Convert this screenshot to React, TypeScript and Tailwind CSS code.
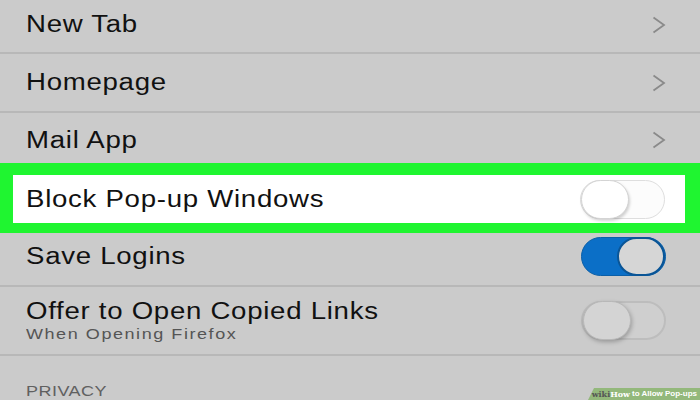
import React from 'react';

const Chevron = () => (
  <svg width="14" height="18" viewBox="0 0 14 18" className="shrink-0">
    <polyline points="1.5,1.5 12,9 1.5,16.5" fill="none" stroke="#8a8a8a" strokeWidth="1.8" />
  </svg>
);

interface ToggleProps {
  on?: boolean;
  trackClass: string;
  knobClass: string;
}

const Toggle: React.FC<ToggleProps> = ({ on, trackClass, knobClass }) => (
  <div
    className={`flex h-[39px] w-[85px] shrink-0 items-center rounded-full ${on ? 'justify-end' : 'justify-start'} ${trackClass}`}
  >
    <div className={`h-[39px] w-[48px] rounded-full ${knobClass}`} />
  </div>
);

// the screenshot is stretched sideways, so the text is too
const title = 'inline-block origin-left scale-x-[1.2] text-[23px] leading-none tracking-[0.6px] text-[#111]';

export default function App() {
  return (
    <div className="relative h-[400px] w-[700px] overflow-hidden bg-[#cbcbcb] font-['Liberation_Sans',Arial,sans-serif]">
      <div className="flex h-[52px] items-center justify-between pb-[3px] pl-[26px] pr-[34px]">
        <span className={title}>New Tab</span>
        <Chevron />
      </div>
      <div className="h-[2px] bg-[#b8b8b8]" />
      <div className="flex h-[57px] items-center justify-between pl-[26px] pr-[34px]">
        <span className={title}>Homepage</span>
        <Chevron />
      </div>
      <div className="h-[2px] bg-[#b8b8b8]" />
      <div className="flex h-[50px] items-center justify-between pt-[4px] pl-[26px] pr-[34px]">
        <span className={title}>Mail App</span>
        <Chevron />
      </div>

      {/* highlighted row */}
      <div className="h-[70px] border-t-[12px] border-r-[15px] border-b-[10px] border-l-[13px] border-[#1ff530]">
        <div className="flex h-full items-center justify-between bg-white pl-[13px] pr-[20px]">
          <span className={title}>Block Pop-up Windows</span>
          <Toggle
            trackClass="border-[1.5px] border-[#dedede] bg-[#fcfcfc]"
            knobClass="border border-[#d4d4d4] bg-white shadow-[1px_2px_3px_rgba(0,0,0,0.18)]"
          />
        </div>
      </div>

      <div className="flex h-[52px] items-center justify-between pb-[5px] pl-[26px] pr-[34px]">
        <span className={title}>Save Logins</span>
        <Toggle
          on
          trackClass="bg-[#0b6fc7] border-[1.5px] border-[#0b5fa8]"
          knobClass="border-[2px] border-[#0a5596] bg-[#d6d6d6]"
        />
      </div>
      <div className="h-[2px] bg-[#b8b8b8]" />
      <div className="flex h-[67px] items-center justify-between pl-[26px] pr-[34px]">
        <div className="flex flex-col items-start gap-[3px]">
          <span className={title}>Offer to Open Copied Links</span>
          <span className="inline-block origin-left scale-x-[1.2] text-[15px] leading-none tracking-[1.3px] text-[#555]">
            When Opening Firefox
          </span>
        </div>
        <Toggle
          trackClass="border-[2px] border-[#bdbdbd] bg-[#cfcfcf]"
          knobClass="border border-[#b8b8b8] bg-[#d4d4d4] shadow-[1px_2px_4px_rgba(0,0,0,0.25)]"
        />
      </div>
      <div className="h-[2px] bg-[#b8b8b8]" />
      <div className="pt-[27px] pl-[26px] leading-none">
        <span className="block origin-left scale-x-[1.2] text-[15px] leading-none tracking-[0.4px] text-[#606060]">PRIVACY</span>
      </div>

      {/* watermark */}
      <div className="absolute bottom-0 right-0 flex h-[12px] w-[112px] items-center justify-end bg-[#93b87b] pr-[3px] [clip-path:polygon(6px_0,100%_0,100%_100%,0_100%)]">
        <span className="font-['DejaVu_Serif',serif] text-[8px] leading-none font-bold text-[#555]">wiki</span>
        <span className="font-['DejaVu_Serif',serif] text-[8px] leading-none font-bold text-white">How</span>
        <span className="ml-[2px] text-[8px] leading-none font-bold text-white">to Allow Pop-ups</span>
      </div>
    </div>
  );
}
